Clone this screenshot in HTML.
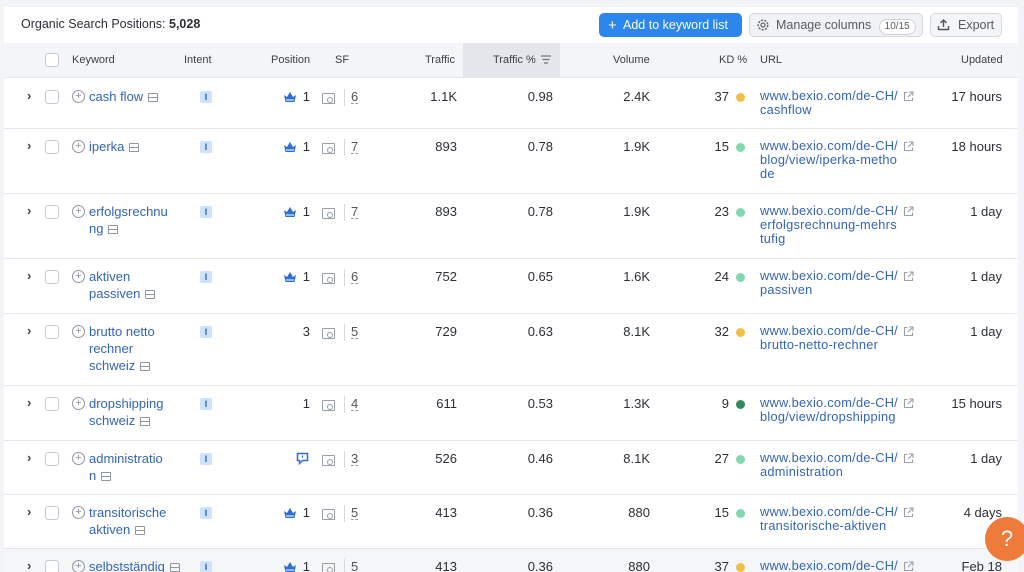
<!DOCTYPE html>
<html style="overflow:hidden"><head><meta charset="utf-8">
<style>
*{box-sizing:border-box;margin:0;padding:0}
html,body{width:1024px;height:572px;overflow:hidden}
body{background:#f3f4f7;font-family:"Liberation Sans",sans-serif;color:#2b2f36;font-size:13px;position:relative}
.card{position:absolute;left:4px;top:7px;width:1014px;height:565px;background:#fff}
.a{position:absolute;white-space:nowrap}
.hdr{position:absolute;left:4px;top:43px;width:1014px;height:35px;background:#f4f5f9;border-bottom:1px solid #e6e8ee}
.th{position:absolute;top:54px;font-size:11px;color:#3b3f46}
.sep{position:absolute;left:4px;width:1014px;height:1px;background:#e6e8ee}
.cb{position:absolute;width:14px;height:14px;border:1px solid #c6cad2;border-radius:3px;background:#fff}
.chev{position:absolute;font-size:13px;color:#444;font-weight:bold}
.kw{position:absolute;left:89px;color:#3465b3;font-size:13px;line-height:17px;width:95px;white-space:normal}
.plus{position:absolute;left:72px;width:13px;height:13px;border:1.3px solid #9097a1;border-radius:50%;color:#9097a1;font-size:11px;line-height:10px;text-align:center}
.ser{display:inline-block;width:10px;height:9px;border:1.2px solid #9097a1;border-radius:1px;vertical-align:-1px;margin-left:5px;position:relative}
.ser:after{content:"";position:absolute;left:0;right:0;top:3px;border-top:1.2px solid #9097a1}
.int{position:absolute;left:200px;width:12px;height:12px;background:#cfe2fb;border-radius:2px;color:#2d66c3;font-size:9px;text-align:center;line-height:12px;font-weight:bold}
.num{position:absolute;text-align:right;font-size:13px}
.sf{position:absolute;left:322px;width:13px;height:11px;border:1.2px solid #9aa0a8;border-radius:1px}
.sf:after{content:"";position:absolute;right:1px;bottom:0px;width:4px;height:4px;border:1px solid #9aa0a8;border-radius:50%}
.sfl{position:absolute;left:344px;width:1px;height:17px;background:#d6d9de}
.sfn{position:absolute;left:351px;font-size:13px;color:#555;border-bottom:1px dashed #999;line-height:13px}
.dot{position:absolute;left:736px;width:9px;height:9px;border-radius:50%}
.url{position:absolute;left:760px;color:#3465b3;line-height:14px;font-size:12.8px;letter-spacing:.25px}
.ext{position:absolute;left:903px;width:11px;height:11px}
</style></head><body>
<div class="card"></div>
<div class="a" style="left:21px;top:17px;font-size:12.5px;color:#2b2f36">Organic Search Positions: <b>5,028</b></div>
<div class="a" style="left:599px;top:13px;width:143px;height:24px;background:#2b86ee;border-radius:5px;color:#fff;font-size:12.5px;line-height:24px;padding-left:9px"><span style="font-size:15px;vertical-align:-1px">+</span>&nbsp; Add to keyword list</div>
<div class="a" style="left:749px;top:13px;width:174px;height:24px;background:#f1f2f5;border:1px solid #d6d9de;border-radius:5px;color:#555b63;font-size:12.5px;line-height:22px;padding-left:26px">Manage columns <span style="display:inline-block;margin-left:4px;border:1px solid #cfd2d8;background:#fff;border-radius:9px;font-size:10px;line-height:14px;padding:0 5px">10/15</span></div>
<svg class="a" style="left:756px;top:18px" width="14" height="14" viewBox="0 0 14 14"><circle cx="7" cy="7" r="4.8" fill="none" stroke="#666" stroke-width="1.4" stroke-dasharray="2.2 1.2"/><circle cx="7" cy="7" r="2" fill="none" stroke="#666" stroke-width="1.3"/></svg>
<div class="a" style="left:930px;top:13px;width:72px;height:24px;background:#f4f5f7;border:1px solid #d6d9de;border-radius:5px;color:#555b63;font-size:12.5px;line-height:22px;padding-left:27px">Export</div>
<svg class="a" style="left:937px;top:18px" width="13" height="13" viewBox="0 0 13 13"><path d="M6.5 9V2M3.5 5l3-3 3 3M1.5 8v3.5h10V8" fill="none" stroke="#555" stroke-width="1.4"/></svg>

<div class="hdr"></div>
<div class="a" style="left:463px;top:43px;width:97px;height:35px;background:#e4e6eb"></div>
<div class="cb" style="left:45px;top:53px"></div>
<div class="th" style="left:72px">Keyword</div>
<div class="th" style="left:184px">Intent</div>
<div class="th" style="left:271px">Position</div>
<div class="th" style="left:335px">SF</div>
<div class="th" style="left:425px">Traffic</div>
<div class="th" style="left:493px">Traffic %</div>
<svg class="a" style="left:541px;top:55px" width="10" height="9"><path d="M0 1h10M1.5 4.5h7M3 8h4" stroke="#777" stroke-width="1.2"/></svg>
<div class="th" style="left:613px">Volume</div>
<div class="th" style="left:719px">KD %</div>
<div class="th" style="left:760px">URL</div>
<div class="th" style="left:961px">Updated</div>

<div class="a" style="left:4px;top:548px;width:1014px;height:24px;background:#f5f6f8"></div>

<div id="rows"></div>
<div class="a" style="left:985px;top:517px;width:44px;height:44px;border-radius:50%;background:#ee7a3c;color:#fff;font-size:22px;text-align:center;line-height:44px">?</div>

<script>
const rows=[
[78,["cash flow"],"c","1","6","1.1K","0.98","2.4K","37","#f1c04a",["www.bexio.com/de-CH/","cashflow"],"17 hours"],
[128,["iperka"],"c","1","7","893","0.78","1.9K","15","#7fd8b0",["www.bexio.com/de-CH/","blog/view/iperka-metho","de"],"18 hours"],
[193,["erfolgsrechnu","ng"],"c","1","7","893","0.78","1.9K","23","#7fd8b0",["www.bexio.com/de-CH/","erfolgsrechnung-mehrs","tufig"],"1 day"],
[258,["aktiven","passiven"],"c","1","6","752","0.65","1.6K","24","#7fd8b0",["www.bexio.com/de-CH/","passiven"],"1 day"],
[313,["brutto netto","rechner","schweiz"],"","3","5","729","0.63","8.1K","32","#f1c04a",["www.bexio.com/de-CH/","brutto-netto-rechner"],"1 day"],
[385,["dropshipping","schweiz"],"","1","4","611","0.53","1.3K","9","#2f8a5f",["www.bexio.com/de-CH/","blog/view/dropshipping"],"15 hours"],
[440,["administratio","n"],"q","","3","526","0.46","8.1K","27","#7fd8b0",["www.bexio.com/de-CH/","administration"],"1 day"],
[494,["transitorische","aktiven"],"c","1","5","413","0.36","880","15","#7fd8b0",["www.bexio.com/de-CH/","transitorische-aktiven"],"4 days"],
[548,["selbstständig"],"c","1","5","413","0.36","880","37","#f1c04a",["www.bexio.com/de-CH/"],"Feb 18"]];
let h="";
const crown='<svg width="14" height="12" viewBox="0 0 14 12"><path d="M1 4l3 2 3-5 3 5 3-2-1.5 7h-9z" fill="#2f6fd0"/><path d="M3 9h8" stroke="#cfe0fa" stroke-width="1.3"/></svg>';
const flag='<svg width="13" height="13" viewBox="0 0 13 13"><path d="M1.5 1.5h10v7h-5l-3 3v-3h-2z" fill="none" stroke="#2f6fd0" stroke-width="1.5"/><path d="M6.5 3.5v2" stroke="#2f6fd0" stroke-width="1.3"/></svg>';
rows.forEach(r=>{
 const t=r[0], y=t+19;
 if(t>78) h+=`<div class="sep" style="top:${t}px"></div>`;
 h+=`<div class="chev" style="left:27px;top:${y-9}px">›</div>`;
 h+=`<div class="cb" style="left:45px;top:${y-7}px"></div>`;
 h+=`<div class="plus" style="top:${y-7}px">+</div>`;
 h+=`<div class="kw" style="top:${y-9}px">${r[1].join("<br>")}<span class="ser"></span></div>`;
 h+=`<div class="int" style="top:${y-6}px">I</div>`;
 if(r[2]=="c") h+=`<div class="a" style="left:283px;top:${y-6}px">${crown}</div>`;
 if(r[2]=="q") h+=`<div class="a" style="left:296px;top:${y-7}px">${flag}</div>`;
 h+=`<div class="num" style="left:280px;width:30px;top:${y-8}px">${r[3]}</div>`;
 h+=`<div class="sf" style="top:${y-4}px"></div><div class="sfl" style="top:${y-8}px"></div><div class="sfn" style="top:${y-7}px">${r[4]}</div>`;
 h+=`<div class="num" style="left:400px;width:57px;top:${y-8}px">${r[5]}</div>`;
 h+=`<div class="num" style="left:500px;width:53px;top:${y-8}px">${r[6]}</div>`;
 h+=`<div class="num" style="left:590px;width:60px;top:${y-8}px">${r[7]}</div>`;
 h+=`<div class="num" style="left:690px;width:39px;top:${y-8}px">${r[8]}</div>`;
 h+=`<div class="dot" style="top:${y-4}px;background:${r[9]}"></div>`;
 h+=`<div class="url" style="top:${y-8}px">${r[10].join("<br>")}</div>`;
 h+=`<svg class="ext" style="top:${y-6}px" viewBox="0 0 11 11"><path d="M4.5 1.5h-3v8h8v-3M6 1h4v4M10 1L5 6" fill="none" stroke="#9aa0a8" stroke-width="1.1"/></svg>`;
 h+=`<div class="num" style="left:900px;width:102px;top:${y-8}px">${r[11]}</div>`;
});
document.getElementById("rows").innerHTML=h;
</script>
</body></html>
